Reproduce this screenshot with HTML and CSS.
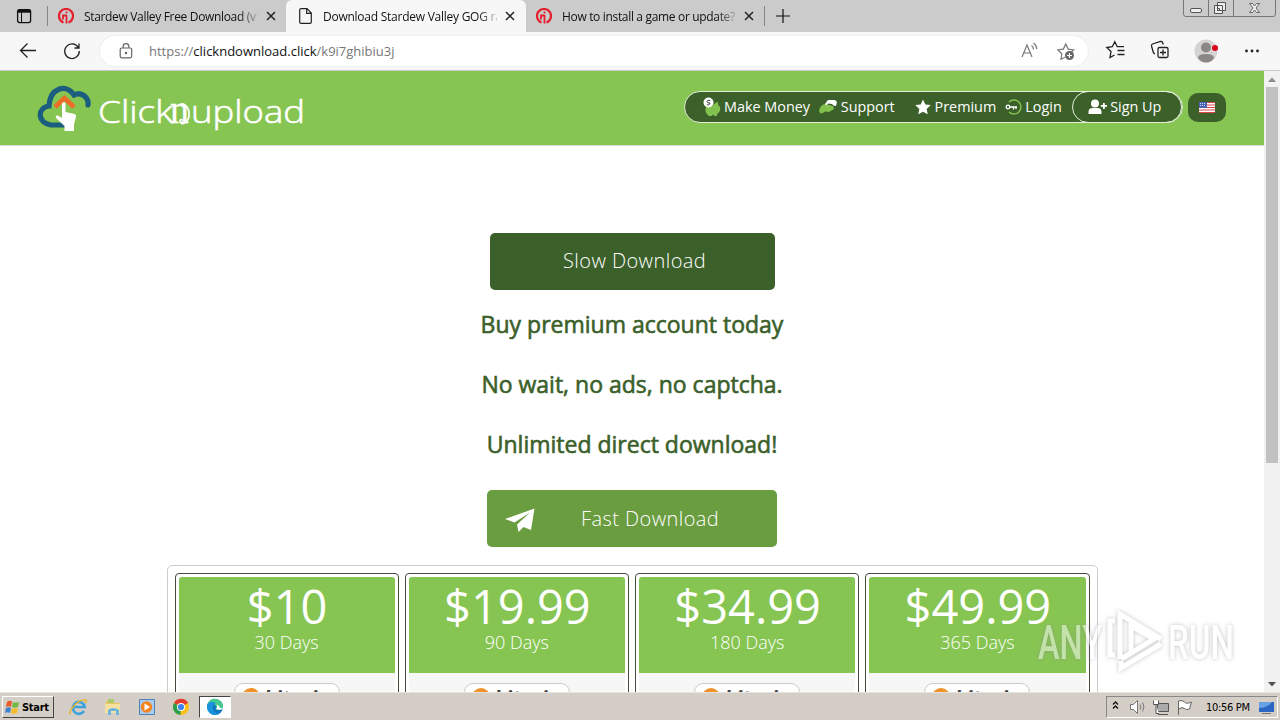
FILE: index.html
```html
<!DOCTYPE html>
<html lang="en">

<head>
    <meta charset="UTF-8">
    <meta name="viewport" content="width=device-width, initial-scale=1.0">
    <title>Download Stardew Valley GOG</title>
    <link rel="stylesheet" href="styles.css">
</head>

<body>
    <div class="tabs">
        <svg class="tab-menu" width="48" height="32" fill="none" stroke="#111">
            <rect x="17.6" y="9.6" width="13" height="13" rx="2" stroke-width="1.3" />
            <path d="M18 11.2h12.5" stroke-width="3" />
            <path d="M21.5 12v10" stroke-width="1" />
            <path d="M47.5 6v20" stroke="#888" />
        </svg>
        <div class="tab first">
            <svg width="16" height="16" fill="none" stroke="#e5202e" stroke-width="2.2">
                <path d="M5.500 14.500A7 7 0 1 1 10.500 14.500" />
                <path d="M8.500 15.500V7M8.500 5.500V3.500M5 11.500V7.500h3.500" stroke-width="1.800" />
            </svg>
            <span class="tab-title">Stardew Valley Free Download (v1</span>
            <svg class="close" width="10" height="10"><path d="M1 1l8 8M9 1l-8 8" /></svg>
        </div>
        <div class="tab active">
            <svg width="16" height="16" fill="none" stroke="#222" stroke-width="1.2">
                <path d="M4 .7h6l4.300 4.300v9q0 1.300-1.300 1.300H4q-1.300 0-1.300-1.300V2Q2.700.7 4 .7zM9.700 1v4.300H14" />
            </svg>
            <span class="tab-title">Download Stardew Valley GOG rar</span>
            <svg class="close" width="10" height="10"><path d="M1 1l8 8M9 1l-8 8" /></svg>
        </div>
        <div class="tab last">
            <svg width="16" height="16" fill="none" stroke="#e5202e" stroke-width="2.2">
                <path d="M5.500 14.500A7 7 0 1 1 10.500 14.500" />
                <path d="M8.500 15.500V7M8.500 5.500V3.500M5 11.500V7.500h3.500" stroke-width="1.800" />
            </svg>
            <span class="tab-title">How to install a game or update?</span>
            <svg class="close" width="10" height="10"><path d="M1 1l8 8M9 1l-8 8" /></svg>
        </div>
        <svg width="36" height="32" stroke="#111" stroke-width="1.2"><path d="M18 9v14M11 16h14" /></svg>
        <svg class="window-buttons" width="94" height="18" fill="none" stroke="#777">
            <path d="M.5 0v14q0 2.500 2.500 2.500h87q2.500 0 2.500-2.500V0M25.500 0v16M50.500 0v16" />
            <rect x="7.500" y="8.500" width="11" height="4" rx="1.500" stroke="#555" fill="#eee" />
            <path d="M34.500 2.500h8v8h-8zM31.500 5.500h8v8h-8zM34.500 8.500h2v2h-2z" stroke="#555" fill="#eee" />
            <path d="M66.500 3.500h3l2 2.500 2-2.500h3l-3.500 4.500 3.500 4.500h-3l-2-2.500-2 2.500h-3l3.500-4.500z" stroke="#666" fill="#eee" />
        </svg>
    </div>

    <div class="toolbar">
        <svg class="nav-buttons" width="100" height="38" fill="none" stroke="#222" stroke-width="1.300">
            <path d="M36 18.500H21M27.500 11.500l-7 7 7 7" />
            <path d="M78.300 15.500A7.300 7.300 0 1 0 79.300 19M79 11.500v4.500h-4.500" />
        </svg>
        <div class="address">
            <svg width="14" height="16" fill="none" stroke="#666" stroke-width="1.200">
                <rect x="1.200" y="5" width="11.500" height="9.800" rx="1.500" />
                <path d="M4.200 5V3.500a2.800 2.800 0 0 1 5.600 0V5" />
                <circle cx="7" cy="10" r=".6" fill="#666" />
            </svg>
            <span class="url">https://<b>clickndownload.click</b>/k9i7ghibiu3j</span>
            <svg class="read" width="57" height="20" fill="none" stroke="#777" stroke-width="1.200">
                <path d="M2 16L7 4l5 12M3.700 12h6.600M11.500 4.500q2 1.500 2 4M13.500 2q3.300 2.500 3.200 6" />
                <path d="M45 16.200l-4 2 .8-5.400-4-3.900 5.500-.8L45.800 3l2.400 5.100 5.500.8-2.700 2.700" />
                <circle cx="49.500" cy="14.500" r="4.500" fill="#666" stroke="none" />
                <path d="M47 14.500h5M49.500 12v5" stroke="#fff" />
            </svg>
        </div>
        <svg class="tools" width="180" height="38" fill="none" stroke="#222" stroke-width="1.300">
            <path d="M26.500 23l-4.500 2.500 1-6-4.200-4 5.500-.8 2.500-5 2.400 5h6.800M29.500 18.500h7M29.500 22.500h7" />
            <rect x="70" y="15.500" width="10" height="10" rx="1.500" />
            <path d="M75 17.500v6M72 20.500h6M67 22q-1.500-.5-1.800-2l-1.700-6q-.3-1.500 1-2l8-2.500q1.500-.3 2 1l.8 2" />
            <g stroke="none">
                <circle cx="118" cy="19" r="11.500" fill="#d6d4d2" />
                <circle cx="118" cy="15.500" r="5" fill="#8a8784" />
                <path d="M110 26q0-4 8-4t8 4q-3 4.500-8 4.500t-8-4.500z" fill="#8a8784" />
                <circle cx="127" cy="16" r="3" fill="#d9001b" />
                <g fill="#222">
                    <circle cx="158.500" cy="19" r="1.400" />
                    <circle cx="164" cy="19" r="1.400" />
                    <circle cx="169.500" cy="19" r="1.400" />
                </g>
            </g>
        </svg>
    </div>

    <div class="viewport">
        <div class="page">
            <header class="header">
                <svg class="logo" width="280" height="56">
                    <path d="M30 42H14C-1 39 1 24 12 23C13 5 29 0 37 12C45 8 52 15 51 22" fill="none" stroke="#1b5d7e" stroke-width="5.200" stroke-linecap="round" />
                    <path d="M18 24l9.500-9 9.500 9" fill="none" stroke="#ee6c25" stroke-width="4.500" />
                    <path d="M25 20q2-1.500 3.500 0v9l9 2q2 .5 1.500 2.500l-2 8v6.500H27.500V43l-8.500-8q-1-3 2-2.500l4 2.500z" fill="#fff" />
                    <text class="logo-text" x="61" y="40" textLength="75" lengthAdjust="spacingAndGlyphs">Click</text>
                    <text class="logo-n" x="133" y="40" textLength="19" lengthAdjust="spacingAndGlyphs">n</text>
                    <path d="M147 38q-4-3-4 .5 1 3 4.500 1.500 5-3 4.500-10-.5-7-6-9" fill="none" stroke="#fff" stroke-width="1.800" />
                    <text class="logo-text" x="154" y="40" textLength="114" lengthAdjust="spacingAndGlyphs">upload</text>
                </svg>
                <nav class="menu">
                    <a class="item money">
                        <svg width="18" height="20">
                            <path d="M3 10q4-3 6-1 4-4 6-4-.5 3 2 5 1 5-3 7v2h-2.500l-1-1.500-2 1.500H6Q1 16 3 10z" fill="#83c14f" />
                            <circle cx="5.500" cy="5.500" r="5" fill="#fff" />
                            <path d="M7.300 3.700Q4 2.500 4 4.500T7 6Q6.500 9 3.800 7.500" fill="none" stroke="#444" />
                        </svg>
                        <span>Make Money</span>
                    </a>
                    <a class="item support">
                        <svg width="19" height="18">
                            <path d="M0 13q1-6 6-7l8 2 1 3-5 3-4-.5-3 2-2-.5z" fill="#83c14f" />
                            <path d="M6 6l3-4h7l2 2-1 4-2.500-.5L13 6l-4-.5L7.500 7.500z" fill="#fff" />
                        </svg>
                        <span>Support</span>
                    </a>
                    <a class="item premium">
                        <svg width="16" height="16"><path d="M8 .5l2.300 4.900 5.400.7-4 3.800 1 5.400L8 12.700l-4.700 2.600 1-5.400-4-3.800 5.400-.7z" fill="#fff" /></svg>
                        <span>Premium</span>
                    </a>
                    <a class="item login">
                        <svg width="18" height="18" fill="none">
                            <path d="M4 4a7 7 0 1 1 0 10" stroke="#83c14f" stroke-width="1.500" />
                            <circle cx="3" cy="9" r="1.800" stroke="#fff" stroke-width="1.300" />
                            <path d="M4.800 9H12M8.500 9v2.500M11 9v2" stroke="#fff" stroke-width="1.300" />
                        </svg>
                        <span>Login</span>
                    </a>
                    <a class="item signup">
                        <svg width="19" height="16" fill="#fff">
                            <circle cx="7" cy="4.500" r="4" />
                            <path d="M.5 15v-2q0-4 4-4h5q4 0 4 4v2zM15 4h1.800v2H19v1.800h-2.200V10H15V7.800h-2.200V6H15z" />
                        </svg>
                        <span>Sign Up</span>
                    </a>
                </nav>
                <a class="language">
                    <svg width="16" height="11">
                        <path fill="#fff" d="M0 0h16v11H0z" />
                        <path d="M0 .5h16M0 3h16M0 5.500h16M0 8h16M0 10.500h16" stroke="#e04444" />
                        <path fill="#4a62b5" d="M0 0h8v6H0z" />
                        <path d="M1 1.500h6M1 3.500h6" stroke="#ccd6ff" stroke-dasharray="1 1" />
                    </svg>
                </a>
            </header>

            <main class="content">
                <a class="button slow">Slow Download</a>
                <h3>Buy premium account today</h3>
                <h3>No wait, no ads, no captcha.</h3>
                <h3>Unlimited direct download!</h3>
                <a class="button fast">
                    <svg width="30" height="26" fill="#fff"><path d="M0 13L29.500 2.500 26 24 18.500 21 13.500 26 12 18.500 25 6.500 9.500 16.500z" /></svg>
                    <span>Fast Download</span>
                </a>
                <div class="plans">
                    <div class="plan">
                        <div class="price"><strong>$10</strong><span>30 Days</span></div>
                        <div class="payments"><div class="bitcoin"><i></i>bitcoin</div></div>
                    </div>
                    <div class="plan">
                        <div class="price"><strong>$19.99</strong><span>90 Days</span></div>
                        <div class="payments"><div class="bitcoin"><i></i>bitcoin</div></div>
                    </div>
                    <div class="plan">
                        <div class="price"><strong>$34.99</strong><span>180 Days</span></div>
                        <div class="payments"><div class="bitcoin"><i></i>bitcoin</div></div>
                    </div>
                    <div class="plan">
                        <div class="price"><strong>$49.99</strong><span>365 Days</span></div>
                        <div class="payments"><div class="bitcoin"><i></i>bitcoin</div></div>
                    </div>
                </div>
            </main>
        </div>
        <div class="scrollbar">
            <svg width="16" height="16" fill="#8b8b8b"><path d="M4 11l4-4.500 4 4.500z" /></svg>
            <div class="thumb"></div>
            <svg class="down" width="16" height="16" fill="#505050"><path d="M4 6l4 4.500L12 6z" /></svg>
        </div>
    </div>

    <svg class="watermark" width="210" height="80">
        <text x="6" y="57" textLength="64" lengthAdjust="spacingAndGlyphs">ANY</text>
        <path class="mark" d="M88 57V12l41 25M83 19h-5v34h5M99 50V24l23 13-33 20M129 42L89 66v-7" />
        <text x="136" y="57" textLength="66" lengthAdjust="spacingAndGlyphs">RUN</text>
    </svg>

    <div class="taskbar">
        <div class="start">
            <svg width="16" height="16">
                <path d="M2 3q3-2 5-.5L6 8Q4 6.500 1 8z" fill="#e8582b" />
                <path d="M8 3q3 1.500 6 0l-1 5q-3 1.500-6 0z" fill="#72b843" />
                <path d="M1 9q3-1.500 5 0l-1 5q-3-1.500-5 0z" fill="#3c82ce" />
                <path d="M7 9q3 1.500 6 0l-1 5q-3 1.500-6 0z" fill="#f6bd28" />
            </svg>
            Start
        </div>
        <div class="launch">
            <svg width="20" height="20" fill="none">
                <path d="M16 14a6 6 0 1 1 .8-4H5" stroke="#3ea3dc" stroke-width="2.600" />
                <path d="M3 16Q-1 18 5 10T18 3q1 1-1 3" stroke="#eab52b" stroke-width="1.300" />
            </svg>
            <svg width="18" height="18">
                <path d="M2 3h6l1 2h7v10H2z" fill="#e8c763" />
                <path d="M4 1h6v4H4z" fill="#a9c96b" />
                <path d="M1 6h15v9H1z" fill="#f5e2a0" />
                <path d="M4 17v-5q5-4 11 0v5h-3v-4H7v4z" fill="#6bb4db" />
            </svg>
            <svg width="18" height="18">
                <path d="M1.500 1.500h15v15h-15z" fill="#a9cbed" stroke="#4e82bd" />
                <circle cx="8.500" cy="9" r="5.700" fill="#f5841f" />
                <path d="M6.500 5.500v7l5.500-3.500z" fill="#fff" />
            </svg>
            <svg width="18" height="18">
                <circle cx="9" cy="9" r="8" fill="#fbc116" />
                <path d="M9 9L2 5A8 8 0 0 1 16 5z" fill="#e33b2e" />
                <path d="M9 9L2 5A8 8 0 0 0 8.500 17z" fill="#2c9f4b" />
                <circle cx="9" cy="9" r="4" fill="#fff" />
                <circle cx="9" cy="9" r="3.100" fill="#4183ee" />
            </svg>
        </div>
        <div class="running">
            <svg width="18" height="18">
                <circle cx="9" cy="9" r="8" fill="#1278c5" />
                <path d="M1.500 6Q5-1 12 1.500q5 2 5 7-1 4-6 3.500-2-.5-.5-2.500Q9 4 1.500 6z" fill="#44ca8d" />
                <path d="M1.500 6Q6 2 10 5.500 7 6 6.500 9q0 6 7 6.500Q8 19 3.500 14.500 0 11 1.500 6z" fill="#1a94dc" />
                <path d="M10 11q2-2 .5-4.500 2.500.5 3 2.500t4 .5q-1 3.500-7.500 1.500z" fill="#fff" />
            </svg>
        </div>
        <div class="tray">
            <svg width="94" height="20" fill="none" stroke="#111">
                <path d="M6 7.500l2.500-2.500L11 7.500M6 11.500L8.500 9l2.500 2.500" stroke-width="1.300" />
                <path d="M23.500 7.500h3l4-4v13l-4-4h-3z" fill="#fff" stroke="#777" />
                <path d="M33 7.500q2 2.500 0 5M35.500 5.500q3 4.500 0 9" stroke="#777" />
                <path d="M50.500 6.500h11v8h-11zM51 17.500h10" fill="#aaa" stroke="#555" />
                <path d="M46.500 3.500v4h5v-4M49 7.500v9h3" fill="#fff" stroke="#555" />
                <path d="M71.500 18V4q4-1.500 6 1t7 0l-2 7q-3 1.500-5-.5t-6 .5" fill="#fff" stroke="#666" />
            </svg>
            <span>10:56 PM</span>
            <svg width="17" height="16"><path d="M1 3h15v10H1z" fill="#2a67c5" /><path d="M1 3h13Q9 9 1 9z" fill="#66a2e4" /><path d="M4 14.500h9" stroke="#777" /></svg>
        </div>
    </div>
</body>

</html>
```
FILE: styles.css
```css
* {
    box-sizing: border-box;
}

body {
    margin: 0;
    height: 720px;
    overflow: hidden;
    display: flex;
    flex-direction: column;
    font-family: "Open Sans", sans-serif;
    background: #fff;
}

svg {
    flex: none;
    display: block;
}

/* browser tabs */
.tabs {
    height: 32px;
    flex: none;
    display: flex;
    background: #cbcbcb;
    font-size: 12px;
    color: #111;
}

.tab {
    display: flex;
    align-items: center;
    width: 240px;
    padding-left: 11px;
}

.tab.first {
    width: 238px;
    padding-left: 10px;
}

.tab.last {
    width: 239px;
    padding-left: 10px;
    border-right: 1px solid #888;
    height: 20px;
    margin-top: 6px;
}

.tab.active {
    background: #f7f7f7;
    border-radius: 6px 6px 0 0;
}

.tab-title {
    width: 174px;
    margin: 0 8px 0 10px;
    overflow: hidden;
    white-space: nowrap;
    letter-spacing: -0.33px;
    -webkit-mask-image: linear-gradient(to right, #000 155px, transparent 178px);
    mask-image: linear-gradient(to right, #000 155px, transparent 178px);
}

.tab.active .tab-title {
    letter-spacing: -0.25px;
}

.close {
    stroke: #222;
    stroke-width: 1.5;
}

.window-buttons {
    margin-left: auto;
    margin-right: 3px;
}

/* address bar */
.toolbar {
    height: 39px;
    flex: none;
    display: flex;
    background: #f7f7f7;
    border-bottom: 1px solid #c9c9c9;
}

.address {
    display: flex;
    align-items: center;
    width: 988px;
    height: 30px;
    margin-top: 4px;
    padding: 0 11px 0 19px;
    border-radius: 15px;
    background: #fff;
    box-shadow: 0 0 2px #ddd;
}

.url {
    margin-left: 16px;
    font-size: 13px;
    color: #777;
}

.url b {
    font-weight: 400;
    color: #111;
}

.read {
    margin-left: auto;
}

/* site */
.viewport {
    height: 621px;
    flex: none;
    display: flex;
    overflow: hidden;
}

.page {
    width: 1264px;
}

.header {
    height: 75px;
    display: flex;
    padding: 0 38px 0 37px;
    background: #87c553;
    border-bottom: 1px solid #ddd;
}

.logo {
    margin-top: 12px;
}

.logo-text,
.logo-n {
    fill: #fff;
    font-family: "Open Sans", sans-serif;
    font-size: 32px;
    font-weight: 300;
    stroke: #fff;
    stroke-width: 0.6px;
}

.logo-n {
    font-family: "Liberation Serif", serif;
    font-size: 42px;
    stroke-width: 0.3px;
}

.menu {
    display: flex;
    width: 499px;
    height: 32px;
    margin: 20px 5px 0 auto;
    padding-left: 18px;
    border: 1px solid #e3f0d6;
    border-radius: 16px;
    background: #3b602a;
    color: #fff;
    font-size: 14.4px;
}

.item {
    display: flex;
    align-items: center;
    gap: 3px;
    white-space: nowrap;
}

.item span {
    padding-bottom: 2px;
}

.money {
    width: 116px;
}

.support {
    width: 96px;
}

.premium {
    width: 91px;
    gap: 4px;
}

.login {
    width: 67px;
    gap: 2px;
}

.signup {
    width: 110px;
    height: 32px;
    margin-top: -1px;
    padding-left: 15px;
    border: 1px solid #e3f0d6;
    border-radius: 16px;
}

.language {
    display: flex;
    align-items: center;
    justify-content: center;
    width: 38px;
    height: 29px;
    margin-top: 22px;
    border-radius: 10px;
    background: #3b602a;
}

.content {
    display: flex;
    flex-direction: column;
    align-items: center;
}

.button {
    display: flex;
    align-items: center;
    height: 57px;
    border-radius: 5px;
    color: #fff;
    font-size: 20px;
    font-weight: 300;
    letter-spacing: 0.42px;
}

.slow {
    width: 285px;
    margin: 87px 0 5px 1px;
    padding: 0 0 2px 73px;
    background: #3b602a;
}

h3 {
    height: 60px;
    margin: 0;
    line-height: 59px;
    font-size: 23px;
    font-weight: 400;
    letter-spacing: 0;
    color: #3b602a;
    -webkit-text-stroke: 0.6px #3b602a;
}

.fast {
    width: 290px;
    margin: 15px 0 18px;
    padding-left: 18px;
    background: #6a9c40;
}

.fast span {
    margin-left: 46px;
}

.plans {
    display: flex;
    gap: 6px;
    width: 931px;
    height: 200px;
    padding: 7px;
    border: 1px solid #ccc;
    border-radius: 5px;
}

.plan {
    flex: 1;
    padding: 3px;
    border: 1px solid #444c3d;
    border-radius: 4px;
}

.price {
    display: flex;
    flex-direction: column;
    align-items: center;
    height: 96px;
    border-radius: 3px 3px 0 0;
    background: #87c553;
    color: #fff;
}

.price strong {
    height: 56px;
    line-height: 58px;
    padding-left: 1px;
    font-size: 47px;
    font-weight: 400;
}

.price span {
    line-height: 19px;
    font-size: 18px;
    font-weight: 300;
}

.payments {
    display: flex;
    justify-content: center;
    height: 100px;
    padding-top: 10px;
    background: #f7f7f7;
}

.bitcoin {
    display: flex;
    gap: 4px;
    width: 106px;
    height: 34px;
    padding: 4px 0 0 7px;
    border: 1px solid #ccc;
    border-radius: 9px;
    background: #fff;
    color: #444;
    font: italic bold 20px/20px "Open Sans", sans-serif;
}

.bitcoin i {
    width: 18px;
    height: 18px;
    border-radius: 50%;
    background: #f0922a;
}

.scrollbar {
    width: 16px;
    display: flex;
    flex-direction: column;
    background: #f1f1f1;
}

.thumb {
    width: 12px;
    height: 376px;
    margin: 0 2px;
    background: #c1c1c1;
}

.down {
    margin-top: auto;
}

/* watermark lies over the page */
.watermark {
    position: absolute;
    left: 1032px;
    top: 602px;
    opacity: 0.5;
    filter: drop-shadow(0 0 2px #888);
    fill: #fff;
    font: 500 49px "Roboto", sans-serif;
}

.mark {
    fill: none;
    stroke: #fff;
    stroke-width: 5;
}

/* taskbar */
.taskbar {
    height: 28px;
    flex: none;
    display: flex;
    padding: 1px 2px 0;
    border-top: 1px solid #e6e2de;
    background: #d5cec7;
}

.start {
    display: flex;
    align-items: center;
    gap: 1px;
    width: 52px;
    height: 22px;
    margin-top: 2px;
    padding-left: 2px;
    border: 1px solid;
    border-color: #fff #444 #444 #fff;
    font: bold 11px "DejaVu Sans Condensed", "DejaVu Sans", sans-serif;
    letter-spacing: -0.3px;
}

.launch {
    display: flex;
    align-items: center;
    gap: 16px;
    margin: 0 9px 0 14px;
}

.running {
    display: flex;
    align-items: center;
    justify-content: center;
    width: 32px;
    height: 22px;
    margin-top: 2px;
    border: 1px solid;
    border-color: #444 #fff #fff #444;
    background: #fff;
}

.tray {
    display: flex;
    align-items: center;
    width: 172px;
    height: 22px;
    margin: 2px 0 0 auto;
    border: 1px solid;
    border-color: #888 #fff #fff #888;
    font: 11px "DejaVu Sans Condensed", "DejaVu Sans", sans-serif;
}

.tray span {
    width: 52px;
    margin-left: 5px;
    letter-spacing: -0.3px;
    white-space: nowrap;
}
```
